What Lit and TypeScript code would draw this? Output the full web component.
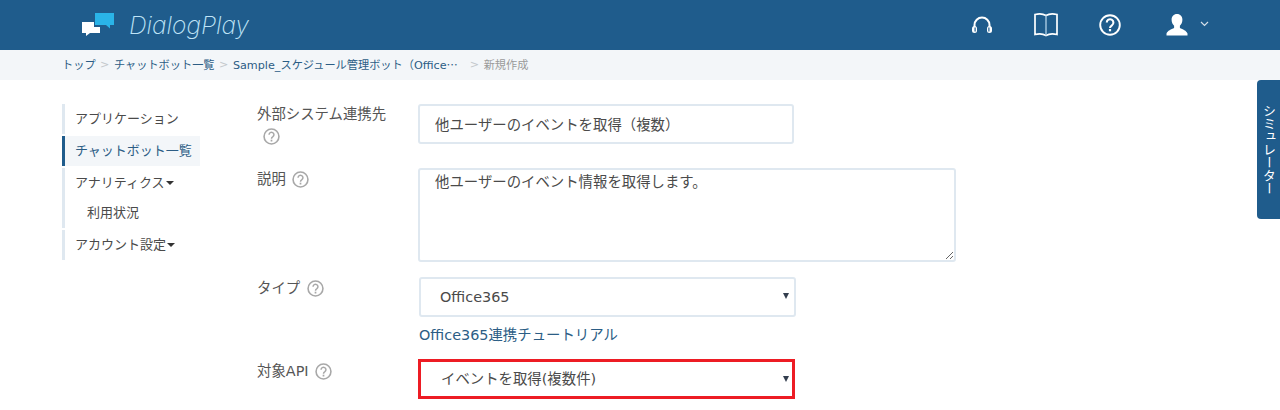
import { LitElement, html, css } from "lit";
import { customElement } from "lit/decorators.js";

const help = html`<svg class="help" viewBox="0 0 16 16" width="17" height="17"><circle cx="8" cy="8" r="7" fill="none" stroke="#a8a8a8" stroke-width="1.5"/><path d="M5.700 6.300a2.300 2.300 0 1 1 3.600 1.900c-.8.500-1.300.9-1.300 1.800" fill="none" stroke="#a8a8a8" stroke-width="1.400"/><rect x="7.200" y="11" width="1.600" height="1.700" fill="#a8a8a8"/></svg>`;

@customElement("app-root")
export class AppRoot extends LitElement {
  static styles = css`
    :host { display: block; position: relative; height: 410px; overflow: hidden; background: #fff; color: #4a4a4a;
      font-family: "DejaVu Sans", "Noto Sans CJK JP", sans-serif; font-size: 14.4px; }
    * { box-sizing: border-box; }
    .top { height: 50px; background: #1f5c8c; display: flex; align-items: center; padding-left: 82px; }
    .logo { display: flex; align-items: center; gap: 14px; width: 884px; }
    .brand { font-family: "Inter", sans-serif; font-style: italic; font-weight: 200; font-size: 24.500px; color: #bfe4f7; }
    .icons { display: flex; align-items: center; }
    .icons svg { display: block; }
    .i1 { margin-left: 5px; } .i2 { margin-left: 41px; } .i3 { margin-left: 41px; } .i4 { margin-left: 45px; } .i5 { margin-left: 12px; margin-bottom: 3px; }
    .crumb { height: 30px; background: #f3f6f9; display: flex; align-items: center; padding: 0 0 2px 62px; font-size: 11.200px; color: #2c5d85; white-space: nowrap; }
    .crumb .sep { color: #c4c8cc; margin: 0 4.500px; }
    .crumb .last { margin-left: 12px; }
    .crumb .el { font-family: "Noto Sans CJK JP", sans-serif; }
    .crumb .cur { color: #9a9a9a; }
    .main { display: flex; padding: 24px 0 0 62px; }
    .side { width: 195px; flex: none; display: flex; flex-direction: column; gap: 2px; }
    .side a { display: flex; flex-direction: column; border-left: 3px solid #dfe8f0; min-height: 30px; color: #4a4a4a; font-size: 13px; }
    .side .h { height: 30px; line-height: 29px; padding-left: 10px; }
    .side .s { height: 30px; line-height: 29px; padding-left: 22px; }
    .side .act { width: 138px; background: #f3f6f9; border-left-color: #1f5c8c; color: #2c5d85; }
    .caret { display: inline-block; border: 4px solid transparent; border-top-color: #333; border-bottom: 0; margin: 0 0 2px 1px; vertical-align: middle; }
    .form { display: flex; flex-direction: column; width: 700px; }
    .row { display: flex; margin-bottom: 16px; }
    .row.tight { margin-bottom: 15px; }
    .lab { width: 161px; flex: none; line-height: 20px; color: #555; padding-top: 1px; }
    .row:first-child .lab { padding-top: 0; }
    .help { vertical-align: -4px; margin-left: 2px; }
    .b1 { display: block; margin-top: 4px; height: 24px; margin-left: 6px; }
    .b1 .help { margin-left: 0; vertical-align: top; }
    input, textarea, select { font: inherit; color: #4a4a4a; border: 2px solid #dfe8f0; border-radius: 3px; background: #fff; outline: none; display: block; }
    input { width: 376px; height: 40px; padding: 0 15px 2px; }
    textarea { width: 538px; height: 94px; padding: 2px 15px 0; line-height: 20px; }
    .col { display: flex; flex-direction: column; margin-left: 1px; }
    .selw { position: relative; width: 377px; height: 40px; }
    select { appearance: none; width: 100%; height: 100%; padding: 0 19px; }
    .selw::after { content: ""; position: absolute; right: 7px; top: 16px; border: 3.500px solid transparent; border-top: 6px solid #333e4e; border-bottom: 0; }
    .link { color: #2c5d85; margin-top: 8px; line-height: 20px; margin-bottom: -1px; }
    .red { margin: -1px 0 0 -1px; }
    .red select { border: 3px solid #ed1c24; border-radius: 0; padding-left: 20px; }
    .red::after { right: 6px; top: 17px; }
    .sim { position: absolute; right: 0; top: 80px; width: 23px; height: 139px; background: #1f5c8c; border-radius: 4px 0 0 4px; color: #fff; writing-mode: vertical-rl; font-size: 13px; display: flex; align-items: center; justify-content: center; line-height: 23px; }
  `;
  render() {
    return html`
      <header class="top">
        <div class="logo">
          <svg width="33" height="24" viewBox="0 0 33 24"><path d="M13 0h19v12h-4v3.500l-4-3.500H13z" fill="#2ab4e8"/><path d="M0 9h12v5h6v6H8l-4 3v-3H0z" fill="#fff"/></svg>
          <span class="brand">DialogPlay</span>
        </div>
        <div class="icons">
          <svg class="i1" width="22" height="18" viewBox="0 0 22 18"><path d="M3.500 11V9a7.500 7.500 0 0 1 15 0v2" fill="none" stroke="#fff" stroke-width="2"/><rect x="1" y="10" width="5" height="7" rx="2.500" fill="#fff"/><rect x="16" y="10" width="5" height="7" rx="2.500" fill="#fff"/><rect x="3.500" y="11.500" width="1.200" height="4" fill="#1f5c8c"/><rect x="17.300" y="11.500" width="1.200" height="4" fill="#1f5c8c"/></svg>
          <svg class="i2" width="24" height="24" viewBox="0 0 24 24"><path d="M1 1.500c4-1 8.500-.5 11 1 2.500-1.500 7-2 11-1v20c-4-1-8.500-.5-11 1-2.500-1.500-7-2-11-1z" fill="none" stroke="#fff" stroke-width="1.700"/><path d="M12 2.500v20" stroke="#a9cbe3" stroke-width="1.400"/></svg>
          <svg class="i3" width="22" height="22" viewBox="0 0 22 22"><circle cx="11" cy="11" r="9.800" fill="none" stroke="#fff" stroke-width="1.900"/><path d="M7.800 8.600a3.300 3.300 0 1 1 5.100 2.700c-1.200.8-1.900 1.300-1.900 2.600" fill="none" stroke="#fff" stroke-width="2.100"/><rect x="9.900" y="15" width="2.200" height="2.300" fill="#fff"/></svg>
          <svg class="i4" width="22" height="22" viewBox="0 0 22 22"><path d="M11 0c3.400 0 5.400 2.500 5.400 5.800 0 2.500-1 4.700-2.500 6v2.200c2.800 1.300 6.600 2.700 7.600 5.500v2H.5v-2c1-2.800 4.800-4.200 7.600-5.500v-2.200c-1.500-1.300-2.500-3.500-2.500-6C5.600 2.500 7.600 0 11 0z" fill="#fff"/></svg>
          <svg class="i5" width="9" height="6" viewBox="0 0 9 6"><path d="M1 1l3.500 3.500L8 1" fill="none" stroke="#d5dfe8" stroke-width="1.200"/></svg>
        </div>
      </header>
      <nav class="crumb">
        <span>トップ</span><span class="sep">&gt;</span><span>チャットボット一覧</span><span class="sep">&gt;</span><span>Sample_スケジュール管理ボット（Office<span class="el" lang="ja">…</span></span><span class="sep last">&gt;</span><span class="cur">新規作成</span>
      </nav>
      <div class="main">
        <aside class="side">
          <a><span class="h">アプリケーション</span></a>
          <a class="act"><span class="h">チャットボット一覧</span></a>
          <a><span class="h">アナリティクス<i class="caret"></i></span><span class="s">利用状況</span></a>
          <a><span class="h">アカウント設定<i class="caret"></i></span></a>
        </aside>
        <div class="form">
          <div class="row">
            <div class="lab">外部システム連携先<span class="b1">${help}</span></div>
            <input .value=${"他ユーザーのイベントを取得（複数）"} />
          </div>
          <div class="row tight">
            <div class="lab">説明 ${help}</div>
            <textarea .value=${"他ユーザーのイベント情報を取得します。"}></textarea>
          </div>
          <div class="row">
            <div class="lab">タイプ ${help}</div>
            <div class="col">
              <div class="selw"><select><option>Office365</option></select></div>
              <div class="link">Office365連携チュートリアル</div>
            </div>
          </div>
          <div class="row">
            <div class="lab">対象API ${help}</div>
            <div class="col">
              <div class="selw red"><select><option>イベントを取得(複数件)</option></select></div>
            </div>
          </div>
        </div>
      </div>
      <div class="sim">シミュレーター</div>
    `;
  }
}
